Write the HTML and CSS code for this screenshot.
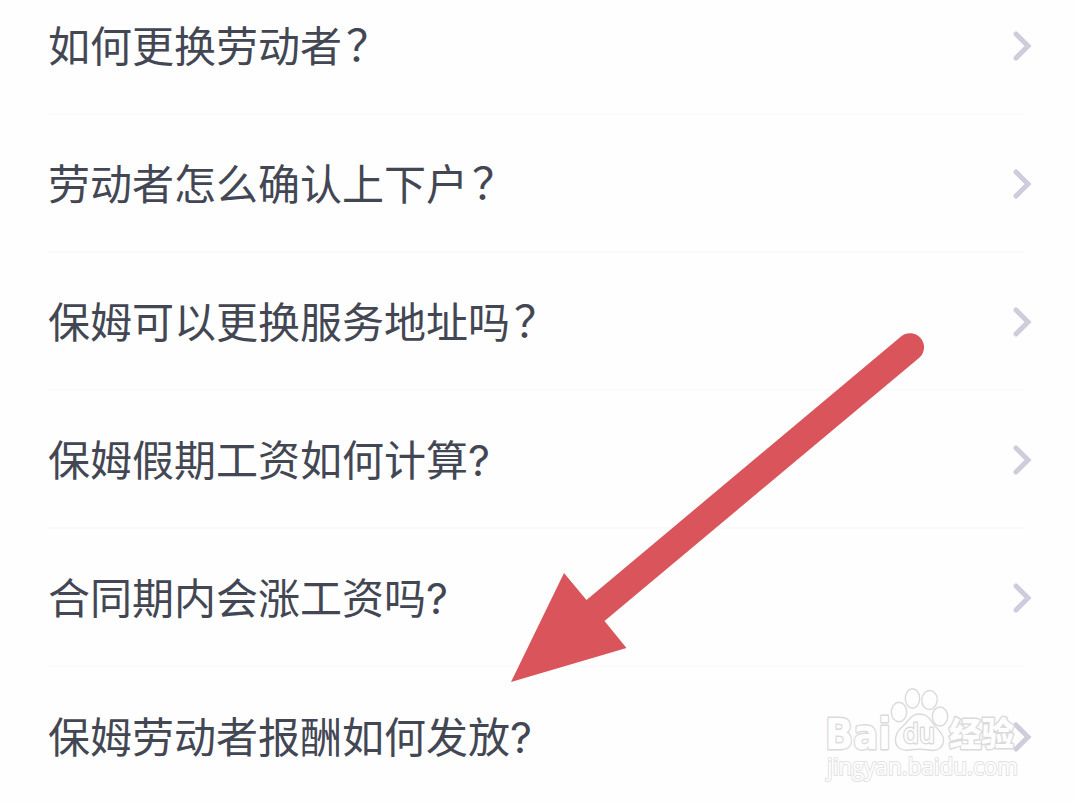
FILE: index.html
```html
<!DOCTYPE html>
<html lang="zh-CN">
<head>
    <meta charset="UTF-8">
    <meta name="viewport" content="width=device-width, initial-scale=1.0">
    <title>常见问题</title>
    <link rel="stylesheet" href="styles.css">
</head>
<body>

    <ul class="faq-list">
        <li class="faq-item">
            <span class="question">如何更换劳动者<span class="full-mark">？</span></span>
            <svg class="chevron" viewBox="0 0 20 30"><path d="M4 3 L16 15 L4 27"/></svg>
        </li>
        <li class="faq-item">
            <span class="question">劳动者怎么确认上下户<span class="full-mark">？</span></span>
            <svg class="chevron" viewBox="0 0 20 30"><path d="M4 3 L16 15 L4 27"/></svg>
        </li>
        <li class="faq-item">
            <span class="question">保姆可以更换服务地址吗<span class="full-mark">？</span></span>
            <svg class="chevron" viewBox="0 0 20 30"><path d="M4 3 L16 15 L4 27"/></svg>
        </li>
        <li class="faq-item">
            <span class="question">保姆假期工资如何计算<span class="half-mark">?</span></span>
            <svg class="chevron" viewBox="0 0 20 30"><path d="M4 3 L16 15 L4 27"/></svg>
        </li>
        <li class="faq-item">
            <span class="question">合同期内会涨工资吗<span class="half-mark">?</span></span>
            <svg class="chevron" viewBox="0 0 20 30"><path d="M4 3 L16 15 L4 27"/></svg>
        </li>
        <li class="faq-item">
            <span class="question">保姆劳动者报酬如何发放<span class="half-mark">?</span></span>
            <svg class="chevron" viewBox="0 0 20 30"><path d="M4 3 L16 15 L4 27"/></svg>
        </li>
    </ul>

    <!-- arrow pointing at the last question -->
    <svg class="arrow" viewBox="0 0 1076 804">
        <path d="M511 682 L564 573 L586.5 600 L901 336.500 A14 14 0 0 1 919 358 L604.500 621 L626.500 648 Z"/>
    </svg>

    <svg class="watermark" viewBox="0 0 210 110">
        <g class="mark">
            <text class="brand" x="3" y="68.500" textLength="66" lengthAdjust="spacingAndGlyphs">Bai</text>
            <ellipse cx="77" cy="32" rx="7.700" ry="9.800"/>
            <ellipse cx="90.500" cy="18.500" rx="7.200" ry="9.800"/>
            <ellipse cx="107.500" cy="20" rx="7.700" ry="9.500" transform="rotate(8 107.500 20)"/>
            <ellipse cx="118" cy="36.500" rx="7.700" ry="9.500"/>
            <path d="M97 34 C89 34 87 41 81 46 C75 51 73 55 73.500 61 C74 68 80 71 87 70 C94 69 101 69 107 70 C116 72 122 67 121.500 59 C121 52 115 50 110 42 C106 36 103 34 97 34 Z"/>
            <text class="du" x="81" y="63" textLength="32" lengthAdjust="spacingAndGlyphs">du</text>
            <text class="cn" x="127" y="65.500" textLength="65" lengthAdjust="spacingAndGlyphs">经验</text>
            <text class="site" x="5" y="94.500" textLength="191" lengthAdjust="spacingAndGlyphs">jingyan.baidu.com</text>
        </g>
    </svg>

</body>
</html>
```

FILE: styles.css
```css
body {
    margin: 0;
    height: 804px;
    overflow: hidden;
    background-color: #fefefe;
    font-family: "Noto Sans CJK SC", sans-serif;
}

.faq-list {
    list-style: none;
    margin: -23px 0 0;
    padding: 0 52px 0 48px;
}

.faq-item {
    display: flex;
    justify-content: space-between;
    align-items: center;
    height: 138px;
    box-sizing: border-box;
    border-bottom: 2px solid #fafafb;
    font-size: 42px;
    line-height: 60px;
    color: #434754;
}

.faq-item:last-child {
    border-bottom: none;
}

.question {
    padding-bottom: 2px;
}

.full-mark {
    margin-left: 4px;
    font-size: 44px;
    line-height: 1;
}

.half-mark {
    font-family: Inter, sans-serif;
    font-size: 43px;
    line-height: 1;
}

.chevron {
    width: 20px;
    height: 30px;
    margin-right: -8px;
    margin-top: 2px;
    fill: none;
    stroke: #cdcddb;
    stroke-width: 5;
    stroke-linecap: round;
}

.arrow {
    position: absolute;
    left: 0;
    top: 0;
    width: 1076px;
    height: 804px;
    fill: #da555b;
}

.watermark {
    position: absolute;
    left: 822px;
    top: 680px;
    width: 210px;
    height: 110px;
}

.mark {
    fill: #fefefe;
    stroke: #dadadc;
    stroke-width: 1.4;
}

.mark text {
    paint-order: stroke;
    stroke-width: 2.8;
    stroke-linejoin: round;
}

.brand {
    font: bold 43px "DejaVu Sans", sans-serif;
}

.du {
    font: 27px "DejaVu Sans", sans-serif;
}

.cn {
    font: 900 33px "Noto Sans CJK SC", sans-serif;
}

.mark .site {
    font: 23px "Open Sans", sans-serif;
    stroke: #e2e2e4;
    stroke-width: 2;
}
```
